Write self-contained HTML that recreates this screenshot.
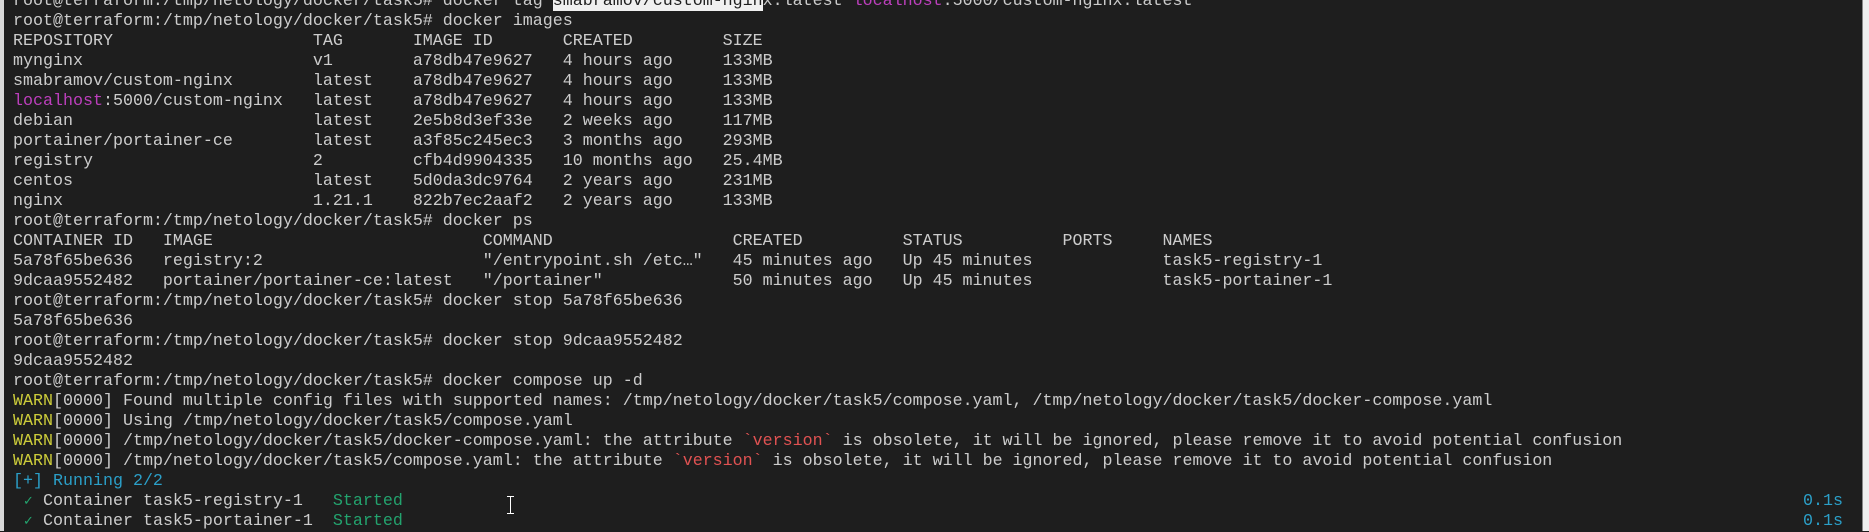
<!DOCTYPE html>
<html><head><meta charset="utf-8"><style>
html,body{margin:0;padding:0;}
body{width:1869px;height:531px;overflow:hidden;background:#1e1e1e;position:relative;}
.lb{position:absolute;left:0;top:0;width:4px;height:531px;background:#d8d8d8;}
.rb{position:absolute;left:1862px;top:0;width:7px;height:531px;background:#efefef;border-left:1px solid #888;}
pre{position:absolute;left:13px;top:-8.5px;margin:0;font-family:"Liberation Mono",monospace;font-size:16.67px;line-height:20px;color:#cccccc;white-space:pre;}
.y{color:#cdcd3a}.m{color:#bc3fbc}.c{color:#2b9fc8}.g{color:#23a36e}.r{color:#e05252}
.ck{display:inline-block;width:10.0px;overflow:hidden;font-size:13px;vertical-align:top;text-align:center;color:#23a36e}
.sel{background:#f0f0f0;color:#1e1e1e}
.t{position:absolute;left:1803px;font-family:"Liberation Mono",monospace;font-size:16.67px;line-height:20px;color:#2b9fc8;}
.cur{position:absolute;left:510px;top:496px;width:1px;height:18px;background:#fff;}
.cur:before,.cur:after{content:"";position:absolute;left:-3px;width:7px;height:1px;background:#fff;}
.cur:before{top:0}.cur:after{bottom:0}
</style></head><body>
<div class="lb"></div>
<pre>root@terraform:/tmp/netology/docker/task5# docker tag <span class="sel">smabramov/custom-ngin</span>x:latest <span class="m">localhost</span>:5000/custom-nginx:latest
root@terraform:/tmp/netology/docker/task5# docker images
REPOSITORY                    TAG       IMAGE ID       CREATED         SIZE
mynginx                       v1        a78db47e9627   4 hours ago     133MB
smabramov/custom-nginx        latest    a78db47e9627   4 hours ago     133MB
<span class="m">localhost</span>:5000/custom-nginx   latest    a78db47e9627   4 hours ago     133MB
debian                        latest    2e5b8d3ef33e   2 weeks ago     117MB
portainer/portainer-ce        latest    a3f85c245ec3   3 months ago    293MB
registry                      2         cfb4d9904335   10 months ago   25.4MB
centos                        latest    5d0da3dc9764   2 years ago     231MB
nginx                         1.21.1    822b7ec2aaf2   2 years ago     133MB
root@terraform:/tmp/netology/docker/task5# docker ps
CONTAINER ID   IMAGE                           COMMAND                  CREATED          STATUS          PORTS     NAMES
5a78f65be636   registry:2                      "/entrypoint.sh /etc…"   45 minutes ago   Up 45 minutes             task5-registry-1
9dcaa9552482   portainer/portainer-ce:latest   "/portainer"             50 minutes ago   Up 45 minutes             task5-portainer-1
root@terraform:/tmp/netology/docker/task5# docker stop 5a78f65be636
5a78f65be636
root@terraform:/tmp/netology/docker/task5# docker stop 9dcaa9552482
9dcaa9552482
root@terraform:/tmp/netology/docker/task5# docker compose up -d
<span class="y">WARN</span>[0000] Found multiple config files with supported names: /tmp/netology/docker/task5/compose.yaml, /tmp/netology/docker/task5/docker-compose.yaml
<span class="y">WARN</span>[0000] Using /tmp/netology/docker/task5/compose.yaml
<span class="y">WARN</span>[0000] /tmp/netology/docker/task5/docker-compose.yaml: the attribute <span class="r">`version`</span> is obsolete, it will be ignored, please remove it to avoid potential confusion
<span class="y">WARN</span>[0000] /tmp/netology/docker/task5/compose.yaml: the attribute <span class="r">`version`</span> is obsolete, it will be ignored, please remove it to avoid potential confusion
<span class="c">[+] Running 2/2</span>
 <span class="ck">✓</span> Container task5-registry-1   <span class="g">Started</span>
 <span class="ck">✓</span> Container task5-portainer-1  <span class="g">Started</span></pre>
<div class="t" style="top:491.5px">0.1s</div>
<div class="t" style="top:511.5px">0.1s</div>
<div class="cur"></div>
<div class="rb"></div>
</body></html>
